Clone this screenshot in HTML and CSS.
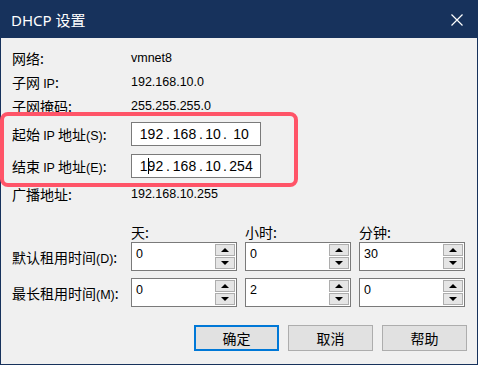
FILE: index.html
```html
<!DOCTYPE html>
<html>
    <head>
        <meta charset="utf-8">
        <link rel="stylesheet" href="styles.css">
    </head>
    <body>
        <div class="window">
            <div class="titlebar">
                <span class="title">DHCP 设置</span>
                <svg class="close" width="12" height="12" viewBox="0 0 12 12">
                    <path d="M0.5 0.5 L11.5 11.5 M11.5 0.5 L0.5 11.5" stroke="#fff" stroke-width="1.2" fill="none"/>
                </svg>
            </div>
            <div class="content">
                <!--network info-->
                <div class="row">
                    <span class="label">网络:</span>
                    <span class="value">vmnet8</span>
                </div>
                <div class="row">
                    <span class="label">子网 <span class="en">IP</span>:</span>
                    <span class="value">192.168.10.0</span>
                </div>
                <div class="row">
                    <span class="label">子网掩码:</span>
                    <span class="value">255.255.255.0</span>
                </div>
                <div class="row iprow first">
                    <span class="label">起始 <span class="en">IP</span> 地址<span class="en">(S)</span>:</span>
                    <div class="ipbox">
                        <span>192</span><span>.</span><span>168</span><span>.</span><span>10</span><span>.</span><span>10</span>
                    </div>
                </div>
                <div class="row iprow second">
                    <span class="label">结束 <span class="en">IP</span> 地址<span class="en">(E)</span>:</span>
                    <div class="ipbox">
                        <span>1<i class="caret"></i>92</span><span>.</span><span>168</span><span>.</span><span>10</span><span>.</span><span>254</span>
                    </div>
                </div>
                <div class="row bcast">
                    <span class="label">广播地址:</span>
                    <span class="value">192.168.10.255</span>
                </div>

                <!--lease times-->
                <div class="thead">
                    <span class="head">天:</span>
                    <span class="head">小时:</span>
                    <span class="head">分钟:</span>
                </div>
                <div class="trow">
                    <span class="label">默认租用时间<span class="en">(D)</span>:</span>
                    <div class="spin"><span class="num">0</span><div class="arrows"><b class="up"></b><b class="down"></b></div></div>
                    <div class="spin"><span class="num">0</span><div class="arrows"><b class="up"></b><b class="down"></b></div></div>
                    <div class="spin"><span class="num">30</span><div class="arrows"><b class="up"></b><b class="down"></b></div></div>
                </div>
                <div class="trow">
                    <span class="label">最长租用时间<span class="en">(M)</span>:</span>
                    <div class="spin"><span class="num">0</span><div class="arrows"><b class="up"></b><b class="down"></b></div></div>
                    <div class="spin"><span class="num">2</span><div class="arrows"><b class="up"></b><b class="down"></b></div></div>
                    <div class="spin"><span class="num">0</span><div class="arrows"><b class="up"></b><b class="down"></b></div></div>
                </div>

                <div class="buttons">
                    <button class="btn default">确定</button>
                    <button class="btn">取消</button>
                    <button class="btn">帮助</button>
                </div>
            </div>
            <div class="mark"></div>
        </div>
    </body>
</html>
```

FILE: styles.css
```css
body {
    margin: 0px;
    background-color: #f0f0f0;
}
.window {
    position: relative;
    width: 478px;
    height: 365px;
    box-sizing: border-box;
    border: 1px solid #17325c;
    background-color: #f0f0f0;
    font-family: "Noto Sans CJK SC", sans-serif;
    font-size: 14px;
    color: #000;
}
.titlebar {
    height: 37px;
    background-color: #17325c;
    color: #fff;
    display: flex;
    align-items: center;
    justify-content: space-between;
    padding: 0px 14px 0px 10px;
}
.title {
    font-family: "Noto Sans", "Noto Sans CJK SC", sans-serif;
    font-size: 15px;
}
.content {
    padding: 8px 0px 0px 11px;
}
.row {
    display: flex;
    align-items: center;
    height: 24px;
}
.label {
    width: 119px;
    flex: none;
    white-space: nowrap;
}
.en {
    font-family: "Liberation Sans", sans-serif;
    font-size: 12.5px;
}
.value {
    font-family: "Liberation Sans", sans-serif;
    font-size: 12.5px;
}
.iprow.first {
    margin-top: 4px;
}
.iprow.second {
    margin-top: 8px;
}
.bcast {
    margin-top: 4px;
}
.ipbox {
    width: 130px;
    height: 24px;
    box-sizing: border-box;
    border: 1px solid #7a7a7a;
    background-color: #fff;
    padding-left: 5px;
    display: grid;
    grid-template-columns: 29px 4px 29px 4px 20px 4px 28px;
    align-items: center;
    text-align: center;
    font-family: "Liberation Sans", sans-serif;
    font-size: 14px;
}
.caret {
    display: inline-block;
    width: 1px;
    height: 16px;
    margin-right: -1px;
    background-color: #000;
    vertical-align: -3px;
}
.thead {
    display: flex;
    height: 20px;
    align-items: center;
    margin-top: 16px;
    padding-left: 119px;
}
.head {
    width: 114px;
}
.trow {
    display: flex;
    align-items: center;
    height: 29px;
    margin-bottom: 7px;
}
.spin {
    display: flex;
    width: 106px;
    height: 29px;
    margin-right: 8px;
    box-sizing: border-box;
    border: 1px solid #7a7a7a;
    background-color: #fff;
}
.num {
    flex: 1;
    padding: 3px 0px 0px 4px;
    font-family: "Liberation Sans", sans-serif;
    font-size: 12.5px;
    line-height: 16px;
}
.arrows {
    width: 20px;
    display: flex;
    flex-direction: column;
    padding: 1px 1px 1px 0px;
    gap: 1px;
}
.arrows b {
    flex: 1;
    position: relative;
    border: 1px solid #adadad;
    background-color: #e5e5e5;
}
.arrows b::after {
    content: "";
    position: absolute;
    left: 50%;
    top: 50%;
    margin-left: -4px;
    border-left: 4px solid transparent;
    border-right: 4px solid transparent;
}
.arrows .up::after {
    margin-top: -2px;
    border-bottom: 4px solid #000;
}
.arrows .down::after {
    margin-top: -2px;
    border-top: 4px solid #000;
}
.buttons {
    display: flex;
    justify-content: flex-end;
    gap: 9px;
    margin-top: 18px;
    padding-right: 10px;
}
.btn {
    width: 85px;
    height: 26px;
    box-sizing: border-box;
    border: 1px solid #adadad;
    background-color: #e1e1e1;
    font-family: "Noto Sans CJK SC", sans-serif;
    font-size: 14px;
    color: #000;
    padding: 0px;
}
.btn.default {
    border: 2px solid #0078d7;
}
.mark {
    position: absolute;
    left: -1px;
    top: 111px;
    width: 298px;
    height: 75px;
    box-sizing: border-box;
    border: 4px solid #ff5468;
    border-radius: 8px;
}
```
